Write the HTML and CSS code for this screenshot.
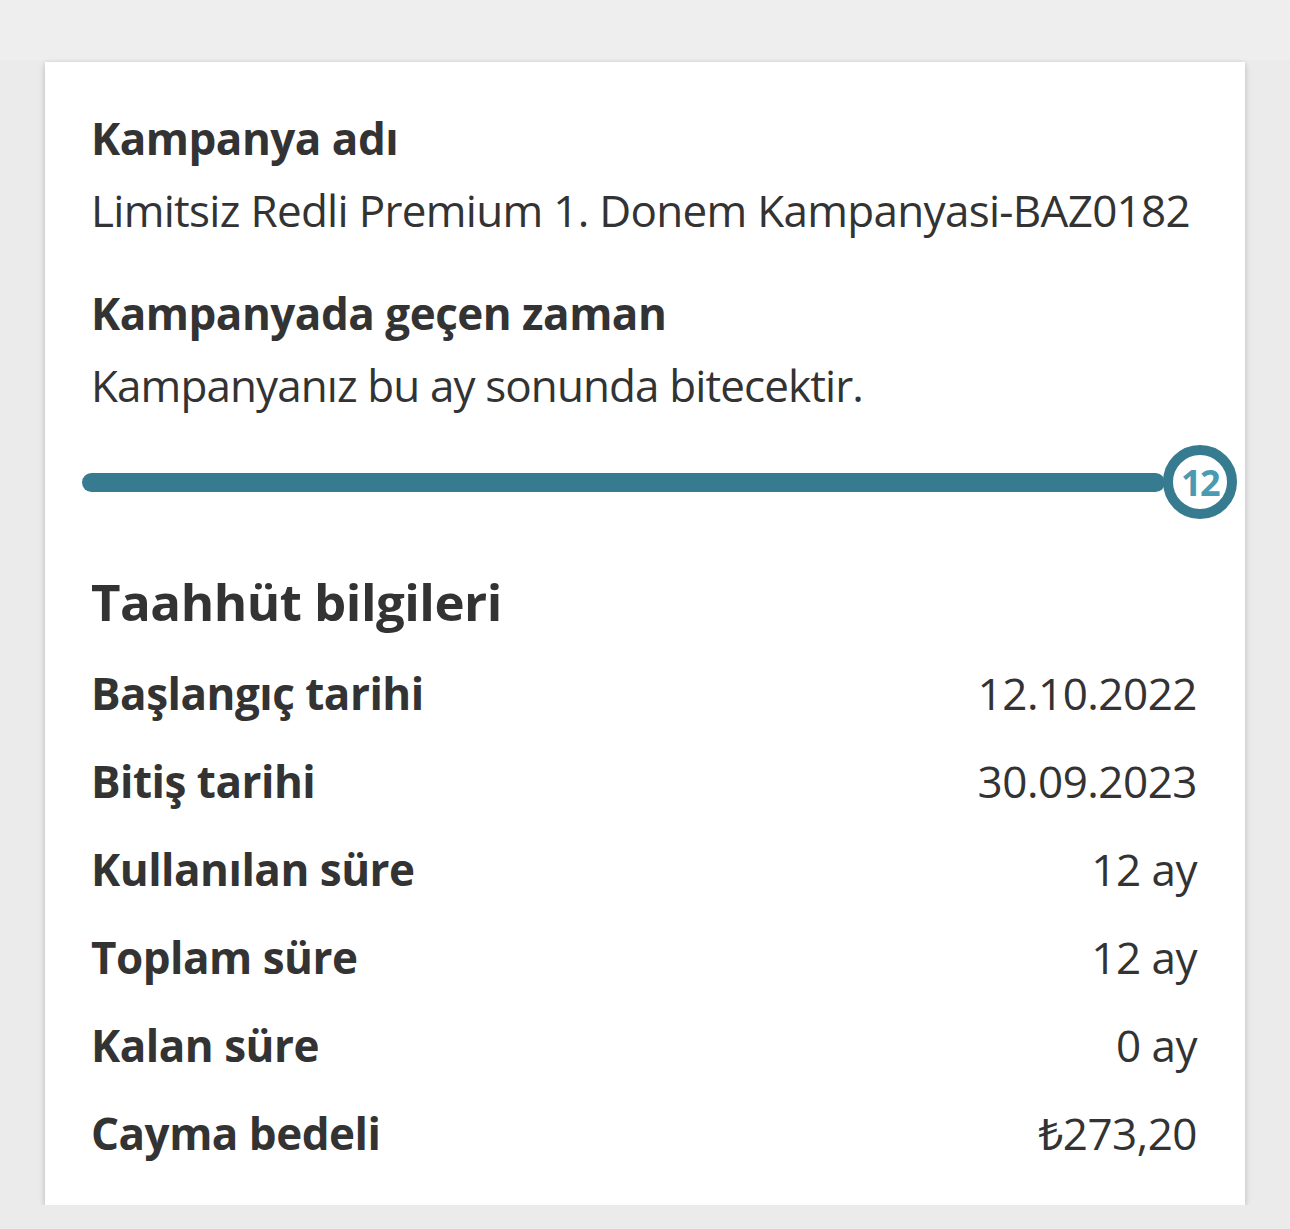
FILE: index.html
```html
<!DOCTYPE html>
<html lang="tr">
<head>
  <meta charset="UTF-8">
  <title>Taahhüt bilgileri</title>
  <link rel="stylesheet" href="styles.css">
</head>
<body>
  <div class="topbar"></div>
  <div class="card">
    <div class="field">
      <div class="field-label">Kampanya adı</div>
      <div class="field-value field-value-long">Limitsiz Redli Premium 1. Donem Kampanyasi-BAZ0182</div>
    </div>

    <div class="field">
      <div class="field-label">Kampanyada geçen zaman</div>
      <div class="field-value">Kampanyanız bu ay sonunda bitecektir.</div>
    </div>

    <div class="progress">
      <div class="progress-track"></div>
      <div class="progress-badge">12</div>
    </div>

    <h2 class="section-title">Taahhüt bilgileri</h2>

    <div class="rows">
      <div class="row"><span class="row-label">Başlangıç tarihi</span><span class="row-value">12.10.2022</span></div>
      <div class="row"><span class="row-label">Bitiş tarihi</span><span class="row-value">30.09.2023</span></div>
      <div class="row"><span class="row-label">Kullanılan süre</span><span class="row-value">12 ay</span></div>
      <div class="row"><span class="row-label">Toplam süre</span><span class="row-value">12 ay</span></div>
      <div class="row"><span class="row-label">Kalan süre</span><span class="row-value">0 ay</span></div>
      <div class="row"><span class="row-label">Cayma bedeli</span><span class="row-value">₺273,20</span></div>
    </div>
  </div>
</body>
</html>
```

FILE: styles.css
```css
body {
  margin: 0;
  background: #ebebeb;
  font-family: "Open Sans", "Noto Sans", sans-serif;
  color: #333333;
}
.topbar {
  height: 60px;
  background: #eeeeee;
}
.card {
  width: 1200px;
  box-sizing: border-box;
  margin: 2px 0 0 45px;
  padding: 40px 48px 28px 46px;
  background: #ffffff;
  box-shadow: 0 2px 6px rgba(0, 0, 0, 0.22);
}
.field + .field {
  margin-top: 31px;
}
.field-label {
  font-size: 44px;
  font-weight: 700;
  line-height: 72px;
  letter-spacing: -0.5px;
}
.field-value {
  font-size: 44px;
  line-height: 72px;
  letter-spacing: -0.9px;
}
.field-value-long {
  white-space: nowrap;
  letter-spacing: -0.7px;
}
.progress {
  display: flex;
  align-items: center;
  margin: 24px -40px 0 -9px;
}
.progress-track {
  flex: 1;
  height: 19px;
  margin-right: -2px;
  background: #367b8f;
  border-radius: 10px;
}
.progress-badge {
  width: 74px;
  height: 74px;
  box-sizing: border-box;
  border: 10px solid #367b8f;
  border-radius: 50%;
  background: #ffffff;
  display: flex;
  align-items: center;
  justify-content: center;
  color: #4a9bb1;
  font-size: 36px;
  font-weight: 700;
  letter-spacing: -1.5px;
}
.section-title {
  margin: 42px 0 0;
  font-size: 51px;
  font-weight: 700;
  line-height: 80px;
  letter-spacing: -0.5px;
}
.rows {
  display: flex;
  flex-direction: column;
  margin-top: 8px;
}
.row {
  display: flex;
  justify-content: space-between;
  align-items: baseline;
  height: 88px;
  line-height: 88px;
  font-size: 44px;
  letter-spacing: -0.5px;
}
.row-label {
  font-weight: 700;
}
```
